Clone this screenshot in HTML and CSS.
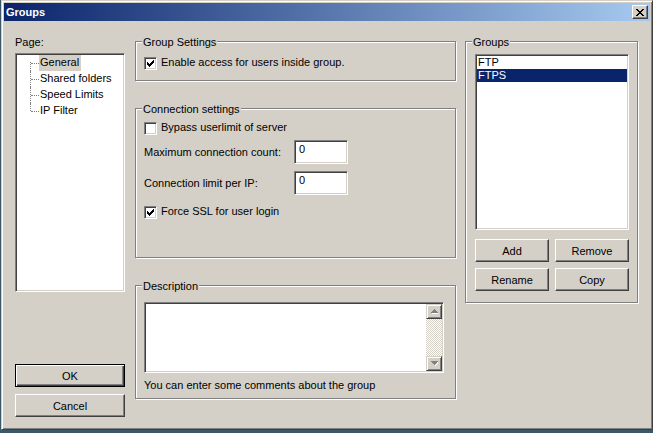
FILE: index.html
```html
<!DOCTYPE html>
<html>
<head>
<meta charset="utf-8">
<title>Groups</title>
<link rel="stylesheet" href="styles.css">
</head>
<body>
<div class="window">
  <div class="titlebar">
    <span class="title">Groups</span>
    <button class="close" aria-label="Close">
      <svg width="8" height="7" viewBox="0 0 8 7" shape-rendering="crispEdges"><path fill="#000" d="M0 0h2v1H0zM6 0h2v1H6zM1 1h2v1H1zM5 1h2v1H5zM2 2h4v1H2zM3 3h2v1H3zM2 4h4v1H2zM1 5h2v1H1zM5 5h2v1H5zM0 6h2v1H0zM6 6h2v1H6z"/></svg>
    </button>
  </div>
  <div class="client">
    <div class="col-left">
      <div class="page-label">Page:</div>
      <ul class="tree sunken">
        <li><span class="branch first"></span><span class="node selected">General</span></li>
        <li><span class="branch"></span><span class="node">Shared folders</span></li>
        <li><span class="branch"></span><span class="node">Speed Limits</span></li>
        <li><span class="branch last"></span><span class="node">IP Filter</span></li>
      </ul>
      <button class="btn default ok">OK</button>
      <button class="btn cancel">Cancel</button>
    </div>

    <div class="col-mid">
      <section class="group gs">
        <div class="group-title">Group Settings</div>
        <div class="check-row gs-row">
          <span class="checkbox"><svg width="7" height="7" viewBox="0 0 7 7" shape-rendering="crispEdges"><path fill="#000" d="M6 0h1v3H6zM5 1h1v3H5zM4 2h1v3H4zM3 3h1v3H3zM2 4h1v3H2zM1 3h1v3H1zM0 2h1v3H0z"/></svg></span>
          <span class="check-text">Enable access for users inside group.</span>
        </div>
      </section>

      <section class="group cs">
        <div class="group-title">Connection settings</div>
        <div class="check-row bypass-row">
          <span class="checkbox"></span>
          <span class="check-text">Bypass userlimit of server</span>
        </div>
        <div class="field-row max-row">
          <span class="field-label">Maximum connection count:</span>
          <span class="field sunken">0</span>
        </div>
        <div class="field-row ip-row">
          <span class="field-label">Connection limit per IP:</span>
          <span class="field sunken">0</span>
        </div>
        <div class="check-row ssl-row">
          <span class="checkbox"><svg width="7" height="7" viewBox="0 0 7 7" shape-rendering="crispEdges"><path fill="#000" d="M6 0h1v3H6zM5 1h1v3H5zM4 2h1v3H4zM3 3h1v3H3zM2 4h1v3H2zM1 3h1v3H1zM0 2h1v3H0z"/></svg></span>
          <span class="check-text">Force SSL for user login</span>
        </div>
      </section>

      <section class="group desc">
        <div class="group-title">Description</div>
        <div class="textarea sunken">
          <div class="text-body"></div>
          <div class="vscroll">
            <span class="sbtn"><svg width="7" height="5" viewBox="0 0 7 5" shape-rendering="crispEdges"><path fill="#fff" d="M4 1h1v1H4zM5 2h1v1H5zM6 3h1v1H6zM1 4h7v1H1z"/><path fill="#808080" d="M3 0h1v1H3zM2 1h3v1H2zM1 2h5v1H1zM0 3h7v1H0z"/></svg></span>
            <span class="track"></span>
            <span class="sbtn"><svg width="7" height="5" viewBox="0 0 7 5" shape-rendering="crispEdges"><path fill="#fff" d="M1 1h7v1H1zM6 2h1v1H6zM5 3h1v1H5zM4 4h1v1H4z"/><path fill="#808080" d="M0 0h7v1H0zM1 1h5v1H1zM2 2h3v1H2zM3 3h1v1H3z"/></svg></span>
          </div>
        </div>
        <div class="hint">You can enter some comments about the group</div>
      </section>
    </div>

    <div class="col-right">
      <section class="group groups">
        <div class="group-title">Groups</div>
        <ul class="listbox sunken">
          <li>FTP</li>
          <li class="sel">FTPS</li>
        </ul>
        <div class="btn-grid">
          <button class="btn">Add</button>
          <button class="btn">Remove</button>
          <button class="btn">Rename</button>
          <button class="btn">Copy</button>
        </div>
      </section>
    </div>
  </div>
</div>
</body>
</html>
```

FILE: styles.css
```css
* { box-sizing: border-box; }
html, body { margin: 0; padding: 0; }
body {
  width: 653px;
  height: 433px;
  overflow: hidden;
  background: #3a5868;
  font-family: "Liberation Sans", Arial, sans-serif;
  font-size: 11px;
  color: #000;
}

.window {
  margin-left: 1px;
  width: 652px;
  height: 430px;
  background: #d4d0c8;
  border: 1px solid;
  border-color: #d4d0c8 #404040 #404040 #d4d0c8;
  box-shadow: inset 1px 1px #fff, inset -1px -1px #808080;
  padding: 2px;
  display: flex;
  flex-direction: column;
}

.titlebar {
  flex: none;
  height: 18px;
  margin-bottom: 1px;
  display: flex;
  justify-content: space-between;
  align-items: flex-start;
  background: linear-gradient(to right, #0a246a, #a6caf0);
  color: #fff;
  font-weight: bold;
}
.title { line-height: 18px; padding-left: 2px; }

.close {
  width: 16px;
  height: 14px;
  margin: 2px 2px 0 0;
  padding: 0;
  display: flex;
  align-items: center;
  justify-content: center;
  background: #d4d0c8;
  border: 1px solid;
  border-color: #fff #404040 #404040 #fff;
  box-shadow: inset -1px -1px #808080;
}

.client {
  flex: 1;
  display: flex;
  align-items: flex-start;
}

/* sunken 3d edge */
.sunken {
  background: #fff;
  border: 1px solid;
  border-color: #808080 #fff #fff #808080;
  box-shadow: inset 1px 1px #404040, inset -1px -1px #d4d0c8;
  padding: 1px;
}

/* buttons */
.btn {
  font: inherit;
  color: #000;
  padding: 0;
  height: 23px;
  background: #d4d0c8;
  border: 1px solid;
  border-color: #fff #404040 #404040 #fff;
  box-shadow: inset -1px -1px #808080;
  text-align: center;
}
.btn.default {
  border-color: #000;
  box-shadow: inset 1px 1px #fff, inset -1px -1px #404040, inset -2px -2px #808080;
}

/* left column */
.col-left {
  width: 110px;
  margin-left: 11px;
  padding-top: 14px;
  display: flex;
  flex-direction: column;
}
.page-label { line-height: 13px; }
.tree {
  list-style: none;
  margin: 4px 0 0;
  height: 239px;
}
.tree li {
  display: flex;
  height: 16px;
}
.branch {
  flex: none;
  position: relative;
  width: 9px;
  margin-left: 13px;
}
.branch::before {
  content: "";
  position: absolute;
  left: 0;
  top: 0;
  bottom: 0;
  border-left: 1px dotted #808080;
}
.branch.first::before { top: 7px; }
.branch.last::before { bottom: 8px; }
.branch::after {
  content: "";
  position: absolute;
  left: 1px;
  right: 0;
  top: 8px;
  border-top: 1px dotted #808080;
}
.node {
  line-height: 15px;
  height: 16px;
  padding: 0 2px 0 1px;
}
.node.selected { background: #d4d0c8; }

.ok { margin-top: 72px; }
.cancel { margin-top: 7px; }

/* group boxes */
.group {
  border: 1px solid #808080;
  box-shadow: inset 1px 1px #fff, 1px 1px #fff;
  padding: 0 8px;
}
.group-title {
  width: fit-content;
  margin: -6px 0 0 -2px;
  padding: 0 1px;
  line-height: 13px;
  background: #d4d0c8;
}

.col-mid {
  width: 321px;
  margin-left: 10px;
  padding-top: 19px;
  display: flex;
  flex-direction: column;
}
.gs { height: 40px; }
.cs { height: 150px; margin-top: 27px; }
.desc { height: 114px; margin-top: 27px; }

.check-row {
  display: flex;
  align-items: flex-start;
}
.checkbox {
  flex: none;
  width: 13px;
  height: 13px;
  background: #fff;
  border: 1px solid;
  border-color: #808080 #fff #fff #808080;
  box-shadow: inset 1px 1px #404040, inset -1px -1px #d4d0c8;
  display: flex;
  align-items: center;
  justify-content: center;
}
.check-text {
  margin: -1px 0 0 4px;
  line-height: 13px;
}
.gs-row { margin-top: 8px; }
.bypass-row { margin-top: 6px; }
.ssl-row { margin-top: 11px; }

.field-row {
  display: flex;
  align-items: center;
}
.max-row { margin-top: 5px; }
.ip-row { margin-top: 7px; }
.field-label { width: 150px; line-height: 13px; }
.field {
  width: 54px;
  height: 24px;
  padding: 2px 4px;
  line-height: 13px;
}

.textarea {
  margin-top: 9px;
  width: 300px;
  height: 71px;
  display: flex;
}
.text-body { flex: 1; }
.vscroll {
  width: 16px;
  display: flex;
  flex-direction: column;
}
.sbtn {
  height: 15px;
  flex: none;
  display: flex;
  align-items: center;
  justify-content: center;
  background: #d4d0c8;
  border: 1px solid;
  border-color: #d4d0c8 #404040 #404040 #d4d0c8;
  box-shadow: inset 1px 1px #fff, inset -1px -1px #808080;
}
.track {
  flex: 1;
  background: repeating-conic-gradient(#d4d0c8 0 25%, #fff 0 50%) 0 0 / 2px 2px;
}
.hint { margin-top: 6px; line-height: 13px; }

/* right column */
.col-right {
  width: 173px;
  margin-left: 9px;
  padding-top: 19px;
}
.groups { height: 262px; }
.listbox {
  list-style: none;
  margin: 5px 0 0 1px;
  width: 154px;
  height: 176px;
}
.listbox li {
  line-height: 13px;
  height: 13px;
  padding-left: 1px;
}
.listbox li.sel {
  background: #0a246a;
  color: #fff;
}
.btn-grid {
  margin: 9px 0 0 1px;
  display: grid;
  grid-template-columns: 74px 74px;
  grid-auto-rows: 23px;
  column-gap: 6px;
  row-gap: 6px;
}
```
